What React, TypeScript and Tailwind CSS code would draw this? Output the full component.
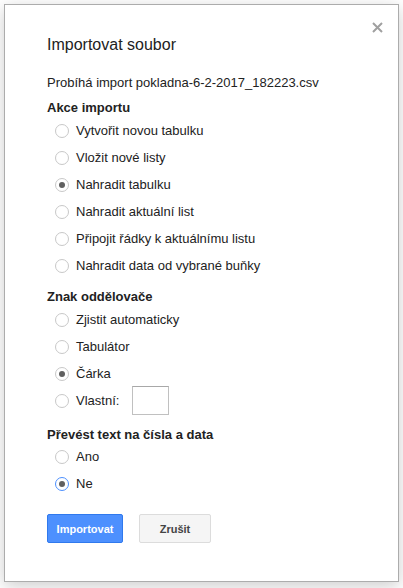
import React from "react";

function Radio({ label, checked, focused }: { label: string; checked?: boolean; focused?: boolean }) {
  return (
    <label className="flex h-[27px] items-center pl-[8px]">
      <span
        className={`flex h-[14px] w-[14px] shrink-0 items-center justify-center rounded-full border bg-white ${
          focused ? "border-[#4d90fe]" : "border-[#c8c8c8]"
        }`}
      >
        {checked && <span className="h-[6px] w-[6px] rounded-full bg-[#606060]" />}
      </span>
      <span className="ml-[7px]">{label}</span>
    </label>
  );
}

export default function App() {
  return (
    <div className="min-h-[588px] bg-white p-[4px] font-['Liberation_Sans',Arial,sans-serif] text-[13px] leading-[16px] text-[#222]">
      <div className="relative h-[578px] w-[395px] border border-[#acacac] bg-white pl-[42px] pt-[30px] shadow-[0_4px_16px_rgba(0,0,0,0.2)]">
        <button className="absolute right-[11px] top-[12px] flex h-[20px] w-[20px] items-center justify-center" aria-label="Zavřít">
          <svg width="11" height="11" viewBox="0 0 11 11">
            <path d="M1 1L10 10M10 1L1 10" stroke="#a0a0a0" strokeWidth="2" />
          </svg>
        </button>
        <h1 className="text-[16px] leading-[20px] text-[#222]">Importovat soubor</h1>
        <p className="mt-[20px]">Probíhá import pokladna-6-2-2017_182223.csv</p>

        <div className="mt-[9px] font-bold">Akce importu</div>
        <div className="mt-[1px]">
          <Radio label="Vytvořit novou tabulku" />
          <Radio label="Vložit nové listy" />
          <Radio label="Nahradit tabulku" checked />
          <Radio label="Nahradit aktuální list" />
          <Radio label="Připojit řádky k aktuálnímu listu" />
          <Radio label="Nahradit data od vybrané buňky" />
        </div>

        <div className="mt-[10px] font-bold">Znak oddělovače</div>
        <div className="mt-[1px]">
          <Radio label="Zjistit automaticky" />
          <Radio label="Tabulátor" />
          <Radio label="Čárka" checked />
          <div className="flex h-[27px] items-center">
            <Radio label="Vlastní:" />
            <input className="ml-[13px] h-[29px] w-[37px] border border-[#c0c0c0] border-t-[#a8a8a8] bg-white outline-none" />
          </div>
        </div>

        <div className="mt-[13px] font-bold">Převést text na čísla a data</div>
        <div>
          <Radio label="Ano" />
          <Radio label="Ne" checked focused />
        </div>

        <div className="mt-[17px] flex gap-[16px]">
          <button className="h-[29px] w-[76px] rounded-[2px] border border-[#3079ed] bg-[#4d90fe] text-[11px] font-bold text-white">
            Importovat
          </button>
          <button className="h-[29px] w-[72px] rounded-[2px] border border-[#dcdcdc] bg-[#f5f5f5] text-[11px] font-bold text-[#444]">
            Zrušit
          </button>
        </div>
      </div>
    </div>
  );
}
